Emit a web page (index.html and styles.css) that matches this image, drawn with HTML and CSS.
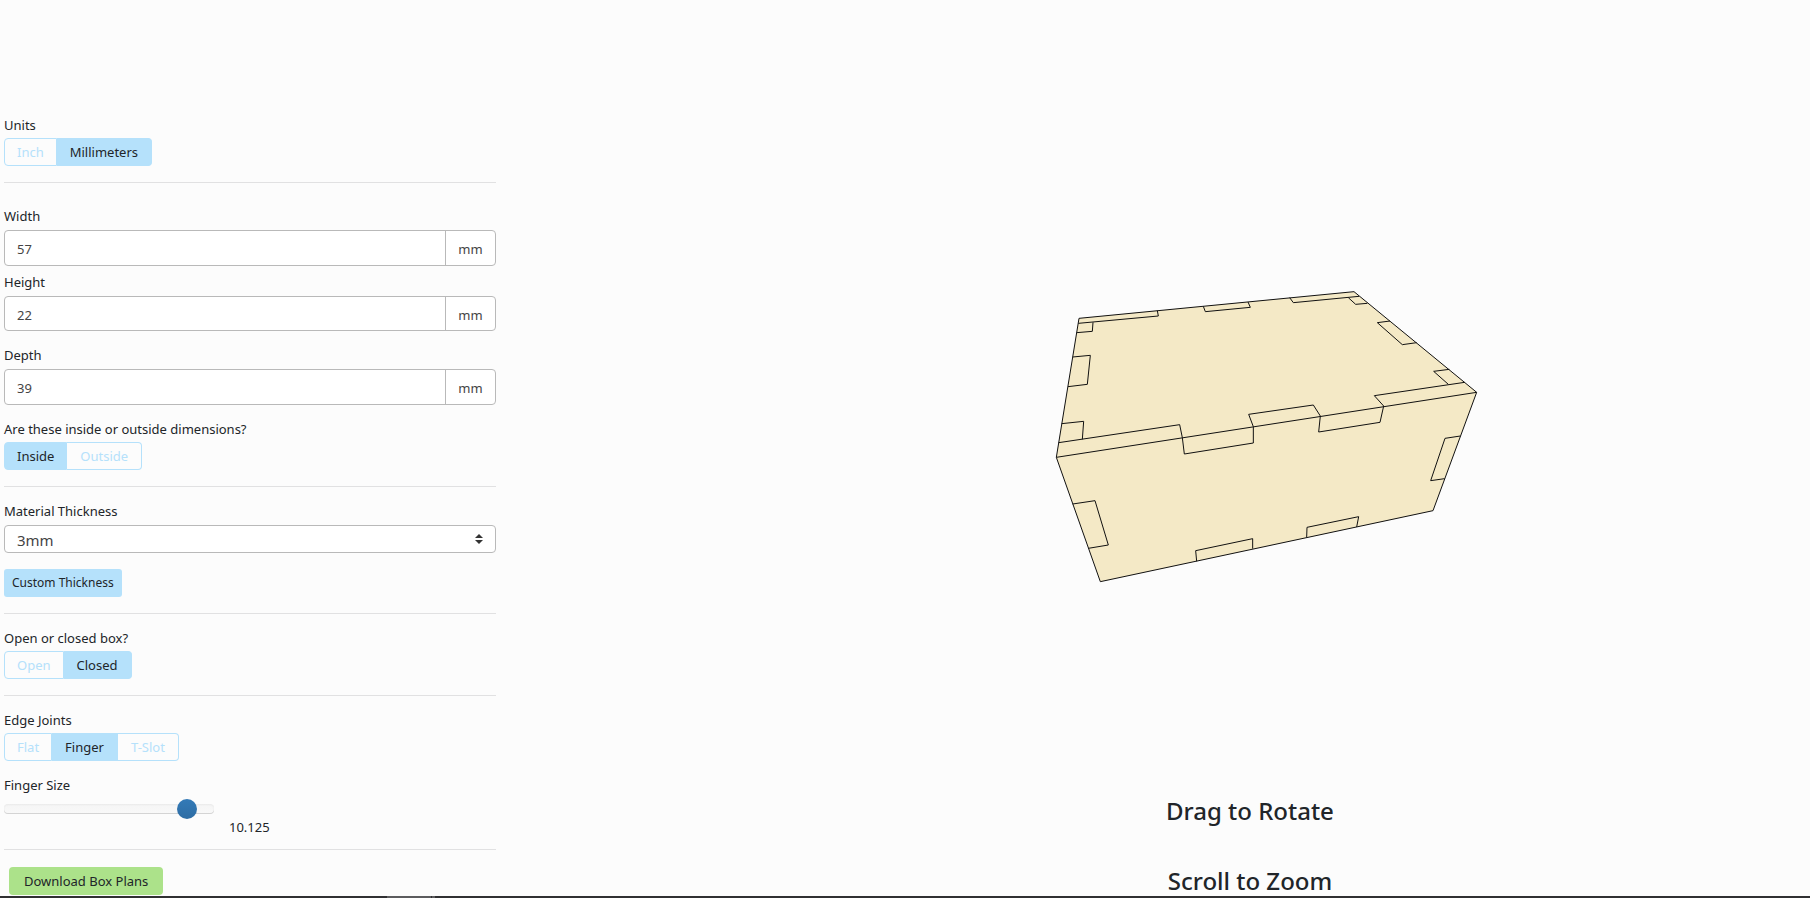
FILE: index.html
```html
<!DOCTYPE html>
<html lang="en">
<head>
<meta charset="utf-8">
<title>Box Designer</title>
<link rel="stylesheet" href="styles.css">
</head>
<body>
<main class="layout">
  <form class="settings">
    <section class="group">
      <span class="label" id="units">Units</span>
      <div class="toggle" role="group" aria-labelledby="units">
        <button type="button" class="option">Inch</button>
        <button type="button" class="option active">Millimeters</button>
      </div>
    </section>
    <section class="group dimensions">
      <div class="field">
        <label class="label" for="width">Width</label>
        <div class="input-group"><input id="width" type="text" value="57"><span class="unit">mm</span></div>
      </div>
      <div class="field height-field">
        <label class="label" for="height">Height</label>
        <div class="input-group"><input id="height" type="text" value="22"><span class="unit">mm</span></div>
      </div>
      <div class="field">
        <label class="label" for="depth">Depth</label>
        <div class="input-group"><input id="depth" type="text" value="39"><span class="unit">mm</span></div>
      </div>
      <span class="label" id="side">Are these inside or outside dimensions?</span>
      <div class="toggle" role="group" aria-labelledby="side">
        <button type="button" class="option active">Inside</button>
        <button type="button" class="option">Outside</button>
      </div>
    </section>
    <section class="group">
      <div class="field">
        <label class="label" for="thickness">Material Thickness</label>
        <div class="select-wrap">
          <select id="thickness"><option>3mm</option></select>
          <svg class="caret" viewBox="0 0 8 10" aria-hidden="true"><path d="M4 0 8 4H0ZM0 6H8L4 10Z"/></svg>
        </div>
      </div>
      <button type="button" class="custom">Custom Thickness</button>
    </section>
    <section class="group">
      <span class="label" id="lid">Open or closed box?</span>
      <div class="toggle" role="group" aria-labelledby="lid">
        <button type="button" class="option">Open</button>
        <button type="button" class="option active">Closed</button>
      </div>
    </section>
    <section class="group joints">
      <span class="label" id="joints">Edge Joints</span>
      <div class="toggle" role="group" aria-labelledby="joints">
        <button type="button" class="option">Flat</button>
        <button type="button" class="option active">Finger</button>
        <button type="button" class="option">T-Slot</button>
      </div>
      <label class="label size-label" for="finger">Finger Size</label>
      <div class="slider-row">
        <input id="finger" class="slider" type="range" min="0" max="100" value="91">
        <output class="size" for="finger">10.125</output>
      </div>
    </section>
    <button type="button" class="download">Download Box Plans</button>
  </form>
  <section class="viewer">
    <svg class="box" viewBox="-90 30 1440 960" role="img" aria-label="Box preview">
      <path class="wood" d="M117 145 942 65 1310 367 1179 722 181 935 49 562Z"/>
      <path d="M49 562 1310 367"/>
      <path d="M115 160 355 138 352 122M110 188 157 184 159 157"/>
      <path d="M490 109 496 125 631 112 624 96"/>
      <path d="M749 83 760 98 957 79M925 83 947 103 982 100"/>
      <path d="M98 261 151 256 142 343 84 350M65 461 131 454 127 508"/>
      <path d="M1050 153 1012 158 1087 224 1130 218M1228 298 1181 304 1225 343"/>
      <path d="M56 518 419 464 427 503 433 552 640 519V470L626 433 820 405 841 438 836 486 1020 457 1031 408 1003 377 1274 337"/>
      <path d="M98 702 165 692 205 825 145 835"/>
      <path d="M470 874 467 842 638 806V836M800 802 801 772 956 740 950 771"/>
      <path d="M1261 498 1215 505 1172 632 1214 626"/>
    </svg>
    <h4 class="hint">Drag to Rotate</h4>
    <h4 class="hint">Scroll to Zoom</h4>
  </section>
</main>
<div class="bottom-edge"><span class="edge-tab"></span><span class="edge-chip"></span></div>
</body>
</html>
```
FILE: styles.css
```css
* { box-sizing: border-box; }
body {
  margin: 0;
  height: 100vh;
  overflow: hidden;
  background: #fcfcfc;
  color: #212529;
  font: 13px/20px "Noto Sans", "Open Sans", sans-serif;
}
button, input, select { font: inherit; color: inherit; margin: 0; }
.layout { display: grid; grid-template-columns: 27.4% 1fr; }
.settings { padding: 115px 0 0 4px; }
.group {
  padding-bottom: 16px;
  margin-bottom: 14px;
  border-bottom: 1px solid #e1e1e2;
}
.group:first-child { margin-bottom: 23px; }
.label { display: block; margin-bottom: 3px; }
.toggle { display: flex; }
.option {
  height: 28px;
  padding: 0 12px;
  border: 1px solid #b5e1fb;
  background: transparent;
  color: #b5e1fb;
  line-height: 26px;
}
.option + .option { border-left: 0; padding: 0 13px; }
.option:first-child { border-radius: 4px 0 0 4px; }
.option:last-child { border-radius: 0 4px 4px 0; }
.option.active { background: #b5e1fb; color: #212529; }
.field { margin-bottom: 14px; }
.field .label { margin-bottom: 4px; }
.dimensions .field:first-child { margin-bottom: 6px; }
.input-group {
  display: flex;
  height: 36px;
  border: 1px solid #b9b9b9;
  border-radius: 4px;
  background: #fff;
  color: #444;
}
.height-field .input-group { height: 35px; }
.input-group input {
  flex: 1;
  min-width: 0;
  padding: 2px 12px 0;
  border: 0;
  background: transparent;
}
.unit {
  display: grid;
  place-items: center;
  width: 50px;
  padding-top: 2px;
  border-left: 1px solid #b9b9b9;
}
.select-wrap { position: relative; margin-bottom: 16px; }
.select-wrap select {
  display: block;
  width: 100%;
  height: 28px;
  padding: 2px 12px 0;
  border: 1px solid #b9b9b9;
  border-radius: 4px;
  background: #fff;
  color: #444;
  font-size: 15px;
  appearance: none;
}
.caret { position: absolute; right: 13px; top: 9px; width: 8px; height: 10px; fill: #333; }
.custom {
  display: block;
  height: 28px;
  padding: 0 8px;
  border: 0;
  border-radius: 3px;
  background: #b5e1fb;
  font-size: 12px;
}
.joints { margin-bottom: 17px; }
.size-label { margin: 14px 0 3px; }
.slider-row { display: flex; gap: 15px; height: 35px; }
.slider {
  appearance: none;
  width: 210px;
  height: 10px;
  margin-top: 6px;
  border-radius: 4px;
  background: linear-gradient(#f5f5f5, #f9f9f9);
  box-shadow: inset 0 1px 2px rgba(0, 0, 0, .05), inset 0 -1px 0 rgba(0, 0, 0, .15);
}
.slider::-webkit-slider-thumb {
  appearance: none;
  width: 20px;
  height: 20px;
  border-radius: 50%;
  background: linear-gradient(#337ab7, #2e6da4);
}
.size { margin-top: 19px; }
.download {
  display: block;
  height: 28px;
  margin-left: 5px;
  padding: 0 15px;
  border: 0;
  border-radius: 4px;
  background: #ace28a;
}
.viewer {
  display: flex;
  flex-direction: column;
  align-items: center;
  padding: 280px 0 0 194px;
}
.box { width: 480px; height: 320px; margin-bottom: 194px; }
.box path { fill: none; stroke: #111; stroke-width: 3; stroke-linejoin: round; }
.box .wood { fill: #f4e9c6; }
.hint { margin: 0 0 36px; font-size: 24px; line-height: 34px; font-weight: 500; }
.bottom-edge {
  position: fixed;
  inset: auto 0 0;
  display: flex;
  gap: 1px;
  height: 2px;
  padding-left: 387px;
  background: #303032;
}
.edge-tab { width: 44px; background: #5c5c5e; }
.edge-chip { width: 3px; background: #5c5c5e; }
```
